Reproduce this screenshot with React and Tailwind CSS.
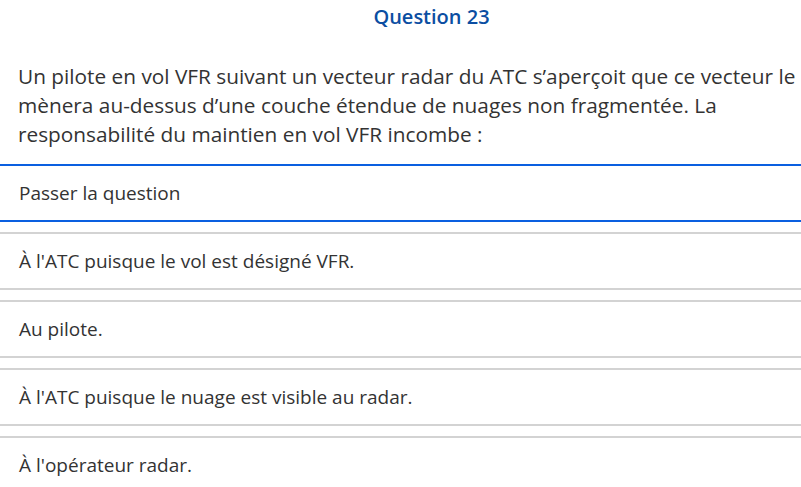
import React from "react";

const options = [
  "À l'ATC puisque le vol est désigné VFR.",
  "Au pilote.",
  "À l'ATC puisque le nuage est visible au radar.",
  "À l'opérateur radar.",
];

export default function App() {
  return (
    <div
      className="w-[801px] h-[487px] overflow-hidden bg-white text-[#333333]"
      style={{ fontFamily: '"Open Sans", "Noto Sans", sans-serif' }}
    >
      {/* Title */}
      <div className="pl-[62px] pt-[3px] h-[62px] text-center">
        <h2 className="text-[20px] leading-[28px] font-semibold text-[#0b4ea2]">
          Question 23
        </h2>
      </div>

      {/* Question body */}
      <p className="pl-[18px] pr-[4px] text-[20.8px] leading-[29px] mb-[15px] whitespace-nowrap">
        Un pilote en vol VFR suivant un vecteur radar du ATC s’aperçoit que ce vecteur le
        <br />
        mènera au-dessus d’une couche étendue de nuages non fragmentée. La
        <br />
        responsabilité du maintien en vol VFR incombe :
      </p>

      {/* Skip */}
      <button className="w-full h-[58px] flex items-center px-[19px] border-y-2 border-[#0a5fe0] text-[19px] text-left mb-[10px]">
        Passer la question
      </button>

      {/* Answers */}
      <div className="flex flex-col gap-[10px]">
        {options.map((o) => (
          <button
            key={o}
            className="w-full h-[58px] flex items-center px-[19px] border-y-2 border-[#d3d3d3] text-[19px] text-left"
          >
            {o}
          </button>
        ))}
      </div>
    </div>
  );
}
